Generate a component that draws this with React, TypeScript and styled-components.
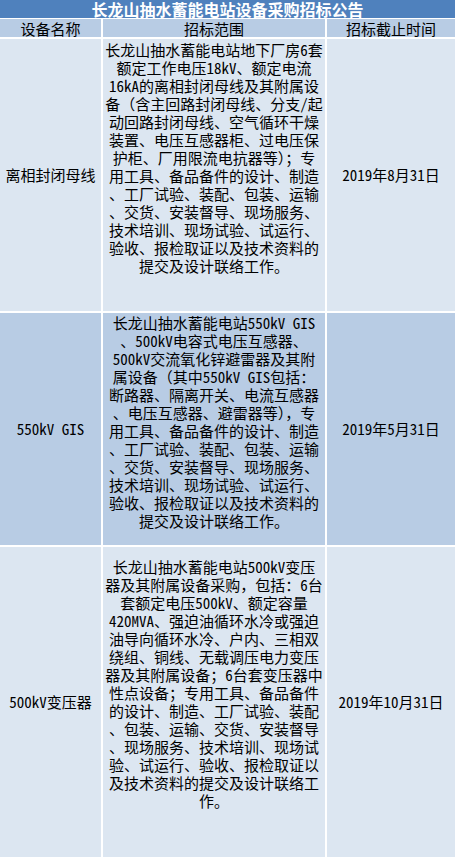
import { Fragment } from 'react'
import styled, { createGlobalStyle } from 'styled-components'

const GlobalStyle = createGlobalStyle`
  html, body {
    margin: 0;
    padding: 0;
    background: #ffffff;
  }
  body {
    font-family: "Noto Sans Mono CJK SC", "Noto Sans CJK SC", sans-serif;
    color: #000000;
  }
`

const Sheet = styled.div`
  width: 455px;
  background: #ffffff;
  display: flex;
  flex-direction: column;
  gap: 1px;
`

const Title = styled.div`
  height: 18px;
  display: flex;
  align-items: center;
  justify-content: center;
  background: #4f81bd;
  color: #ffffff;
  font-size: 16px;
  line-height: 1;
  font-weight: 700;
  font-family: "Noto Sans CJK SC", sans-serif;
`

const Grid = styled.div`
  display: grid;
  grid-template-columns: 101px 222px 128px;
  grid-template-rows: 18px 272px 232px 310px;
  column-gap: 2px;
  row-gap: 2px;
`

const Cell = styled.div<{ $bg: string }>`
  background: ${(p) => p.$bg};
  display: flex;
  align-items: center;
  justify-content: center;
  font-size: 15px;
  line-height: 18px;
  white-space: nowrap;
`

const HeadCell = styled(Cell)`
  padding-top: 1px;
`

// middle column: lines are fixed as in the sheet, so each one is its own row
const Scope = styled.div<{ $bg: string; $top: number }>`
  background: ${(p) => p.$bg};
  padding-top: ${(p) => p.$top}px;
  display: flex;
  flex-direction: column;
  align-items: center;
  font-size: 15px;
  line-height: 18px;
  white-space: pre;
`

const Line = styled.div`
  height: 18px;
`

const LIGHT = '#dce6f1'
const MID = '#b8cce4'

const rows = [
  {
    name: '离相封闭母线',
    date: '2019年8月31日',
    bg: LIGHT,
    top: 2,
    lines: [
      '长龙山抽水蓄能电站地下厂房6套',
      '额定工作电压18kV、额定电流',
      '16kA的离相封闭母线及其附属设',
      '备（含主回路封闭母线、分支/起',
      '动回路封闭母线、空气循环干燥',
      '装置、电压互感器柜、过电压保',
      '护柜、厂用限流电抗器等）；专',
      '用工具、备品备件的设计、制造',
      '、工厂试验、装配、包装、运输',
      '、交货、安装督导、现场服务、',
      '技术培训、现场试验、试运行、',
      '验收、报检取证以及技术资料的',
      '提交及设计联络工作。',
    ],
  },
  {
    name: '550kV GIS',
    date: '2019年5月31日',
    bg: MID,
    top: 1,
    lines: [
      '长龙山抽水蓄能电站550kV GIS',
      '、500kV电容式电压互感器、',
      '500kV交流氧化锌避雷器及其附',
      '属设备（其中550kV GIS包括：',
      '断路器、隔离开关、电流互感器',
      '、电压互感器、避雷器等），专',
      '用工具、备品备件的设计、制造',
      '、工厂试验、装配、包装、运输',
      '、交货、安装督导、现场服务、',
      '技术培训、现场试验、试运行、',
      '验收、报检取证以及技术资料的',
      '提交及设计联络工作。',
    ],
  },
  {
    name: '500kV变压器',
    date: '2019年10月31日',
    bg: LIGHT,
    top: 11,
    lines: [
      '长龙山抽水蓄能电站500kV变压',
      '器及其附属设备采购，包括：6台',
      '套额定电压500kV、额定容量',
      '420MVA、强迫油循环水冷或强迫',
      '油导向循环水冷、户内、三相双',
      '绕组、铜线、无载调压电力变压',
      '器及其附属设备；6台套变压器中',
      '性点设备；专用工具、备品备件',
      '的设计、制造、工厂试验、装配',
      '、包装、运输、交货、安装督导',
      '、现场服务、技术培训、现场试',
      '验、试运行、验收、报检取证以',
      '及技术资料的提交及设计联络工',
      '作。',
    ],
  },
]

export default function App() {
  return (
    <>
      <GlobalStyle />
      <Sheet>
        <Title>长龙山抽水蓄能电站设备采购招标公告</Title>
        <Grid>
          <HeadCell $bg={MID}>设备名称</HeadCell>
          <HeadCell $bg={MID}>招标范围</HeadCell>
          <HeadCell $bg={MID}>招标截止时间</HeadCell>
          {rows.map((r) => (
            <Fragment key={r.name}>
              <Cell $bg={r.bg}>{r.name}</Cell>
              <Scope $bg={r.bg} $top={r.top}>
                {r.lines.map((l, i) => (
                  <Line key={i}>{l}</Line>
                ))}
              </Scope>
              <Cell $bg={r.bg}>{r.date}</Cell>
            </Fragment>
          ))}
        </Grid>
      </Sheet>
    </>
  )
}
